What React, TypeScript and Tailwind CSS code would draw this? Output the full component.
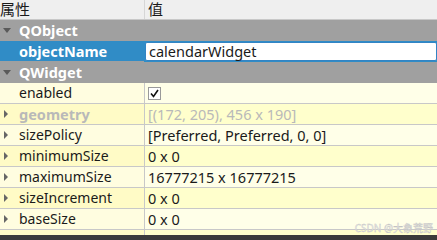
import React from "react";

type Row =
  | { kind: "group"; name: string }
  | { kind: "selected"; name: string; value: string }
  | { kind: "prop"; name: string; value: string; expand?: boolean; disabled?: boolean; check?: boolean; dark: boolean };

const rows: Row[] = [
  { kind: "group", name: "QObject" },
  { kind: "selected", name: "objectName", value: "calendarWidget" },
  { kind: "group", name: "QWidget" },
  { kind: "prop", name: "enabled", value: "", check: true, dark: false },
  { kind: "prop", name: "geometry", value: "[(172, 205), 456 x 190]", expand: true, disabled: true, dark: true },
  { kind: "prop", name: "sizePolicy", value: "[Preferred, Preferred, 0, 0]", expand: true, dark: false },
  { kind: "prop", name: "minimumSize", value: "0 x 0", expand: true, dark: true },
  { kind: "prop", name: "maximumSize", value: "16777215 x 16777215", expand: true, dark: false },
  { kind: "prop", name: "sizeIncrement", value: "0 x 0", expand: true, dark: true },
  { kind: "prop", name: "baseSize", value: "0 x 0", expand: true, dark: false },
];

const font = { fontFamily: '"Noto Sans", "Noto Sans CJK SC", sans-serif' };

function DownArrow() {
  return (
    <svg width="9" height="6" viewBox="0 0 9 6" className="absolute left-[3px] top-[8px]">
      <polygon points="0,0 8,0 4,5" fill="#5a5a5a" />
    </svg>
  );
}

function RightArrow() {
  return (
    <svg width="5" height="9" viewBox="0 0 5 9" className="absolute left-[4px] top-[6px]">
      <polygon points="0,0 4,4 0,8" fill="#666" />
    </svg>
  );
}

export default function App() {
  return (
    <div className="w-[437px] h-[240px] overflow-hidden bg-white relative text-[14px] leading-none" style={font}>
      <div className="flex h-[20px] bg-[#efefef] border-b border-[#c8c8c8]">
        <div className="w-[144px] flex items-center text-[#1a1a1a] text-[15px]">属性</div>
        <div className="w-px bg-[#d6d6d6]" />
        <div className="flex-1 flex items-center pl-[3px] text-[#1a1a1a] text-[15px]">值</div>
      </div>
      {rows.map((r, i) => {
        if (r.kind === "group") {
          return (
            <div key={i} className="relative flex h-[21px] bg-[#a0a0a0] items-center">
              <DownArrow />
              <span className="pl-[19px] font-bold text-white text-[14.5px]">{r.name}</span>
            </div>
          );
        }
        if (r.kind === "selected") {
          return (
            <div key={i} className="flex h-[21px] bg-[#a0a0a0]">
              <div className="w-[144px] bg-[#308cc6] flex items-center pl-[19px] font-bold text-white text-[14.5px] border-b border-[#a0a0a0]">
                {r.name}
              </div>
              <div className="flex-1 bg-[#308cc6] py-[1px] pl-px">
                <div className="h-full bg-white border border-[#3284c4] rounded-[2px] flex items-center pl-[3px] text-[#1a1a1a] text-[14.5px]">
                  {r.value}
                </div>
              </div>
            </div>
          );
        }
        return (
          <div key={i} className="flex h-[21px] border-b border-[#c8c8c8]">
            <div className={`relative w-[144px] flex items-center pl-[19px] ${r.dark ? "bg-[#fffbc6]" : "bg-[#fffde0]"}`}>
              {r.expand && <RightArrow />}
              <span className={r.disabled ? "font-bold text-[#b9b9b9] text-[14.5px]" : "text-[#1a1a1a]"}>{r.name}</span>
            </div>
            <div className="w-px bg-[#c8c8c8]" />
            <div className={`flex-1 flex items-center pl-[3px] text-[14.5px] ${r.dark ? "bg-[#ffffcc]" : "bg-[#ffffe8]"}`}>
              {r.check ? (
                <div className="w-[13px] h-[13px] border border-[#9a9a9a] bg-white flex items-center justify-center">
                  <svg width="9" height="9" viewBox="0 0 9 9">
                    <path d="M1 4.5 L3.5 7.5 L8 1" stroke="#111" strokeWidth="1.6" fill="none" />
                  </svg>
                </div>
              ) : (
                <span className={r.disabled ? "text-[#b9b9b9]" : "text-[#1a1a1a]"}>{r.value}</span>
              )}
            </div>
          </div>
        );
      })}
      <div className="flex h-[5px] ">
        <div className="w-[144px] bg-[#fffbc6]" />
        <div className="w-px bg-[#c8c8c8]" />
        <div className="flex-1 bg-[#ffffcc]" />
      </div>
      <div className="h-[10px] bg-[#3a3a3a]" />
      <div
        className="absolute right-[4px] top-[223px] text-[10px] text-[#ececec]"
        style={{ ...font, WebkitTextStroke: "0.3px #bcbcbc" }}
      >
        CSDN @大象荒野
      </div>
    </div>
  );
}
